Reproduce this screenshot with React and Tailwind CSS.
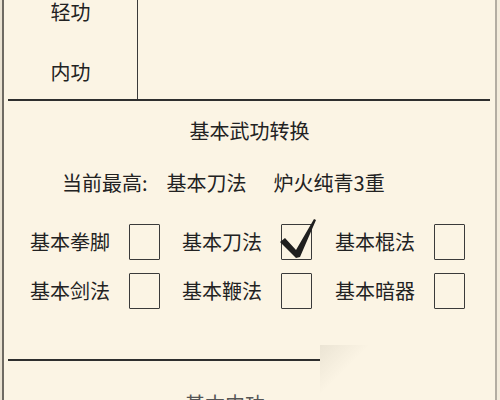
import React from 'react'

const font = { fontFamily: '"Noto Sans CJK SC", "Noto Sans", sans-serif' }

function Box({ checked }) {
    return (
        <div className="relative w-[31px] h-[36px] border-[1.5px] border-[#3a3a3a] rounded-[1px]">
            {checked && (
                <svg className="absolute -left-[3px] -top-[7px] overflow-visible" width="40" height="42" viewBox="0 0 40 42">
                    <path d="M1 24 L6 20 L17 32 L35 1 L37 2 L21 39 L17 40 Z" fill="#1f1f1f" />
                </svg>
            )}
        </div>
    )
}

function Item({ label, checked }) {
    return (
        <div className="flex items-center gap-[19px]">
            <span className="w-[80px] text-[20px] leading-none text-[#222]">{label}</span>
            <Box checked={checked} />
        </div>
    )
}

export default function App() {
    return (
        <div className="w-[500px] h-[400px] overflow-hidden bg-[#fbf4e4] flex" style={font}>
            {/* left frame edge */}
            <div className="w-[2px] bg-[#e9e2d2]" />
            <div className="w-[2px] bg-[#6e6a62]" />

            <div className="flex-1 relative">
                {/* top table */}
                <div className="h-[99px] flex">
                    <div className="w-[134px] border-r-[1.5px] border-[#3a3a3a] flex flex-col items-center text-[20px] text-[#222]">
                        <span className="mt-[-2px] leading-[28px]">轻功</span>
                        <span className="mt-[32px] leading-[28px]">内功</span>
                    </div>
                    <div className="flex-1" />
                </div>
                <div className="ml-[4px] mr-[5px] h-[2px] bg-[#2e2e2e]" />

                <div className="pt-[16px] text-center text-[20px] leading-[28px] text-[#222]">基本武功转换</div>
                <div className="pt-[24px] pl-[58px] text-[20px] leading-[28px] text-[#222] flex">
                    <span>当前最高:</span>
                    <span className="ml-[19px]">基本刀法</span>
                    <span className="ml-[27px]">炉火纯青3重</span>
                </div>

                <div className="pt-[27px] pl-[26px] grid grid-cols-[152px_153px_130px] gap-y-[13px]">
                    <Item label="基本拳脚" />
                    <Item label="基本刀法" checked />
                    <Item label="基本棍法" />
                    <Item label="基本剑法" />
                    <Item label="基本鞭法" />
                    <Item label="基本暗器" />
                </div>

                <div className="pt-[50px]">
                    <div className="ml-[4px] w-[312px] h-[2px] bg-[#2e2e2e]" />
                </div>
                <div className="pt-[29px] pl-[181px] text-[20px] leading-[28px] text-[#555]">基本内功</div>

                {/* page curl shading */}
                <div className="absolute left-[316px] top-[345px] w-[50px] h-[50px] bg-linear-to-br from-[#ebe4d4] via-transparent to-transparent" />
            </div>

            {/* right frame edge */}
            <div className="w-[2px] bg-[#b3ada2]" />
            <div className="w-[3px] bg-[#f3ecdc]" />
        </div>
    )
}
